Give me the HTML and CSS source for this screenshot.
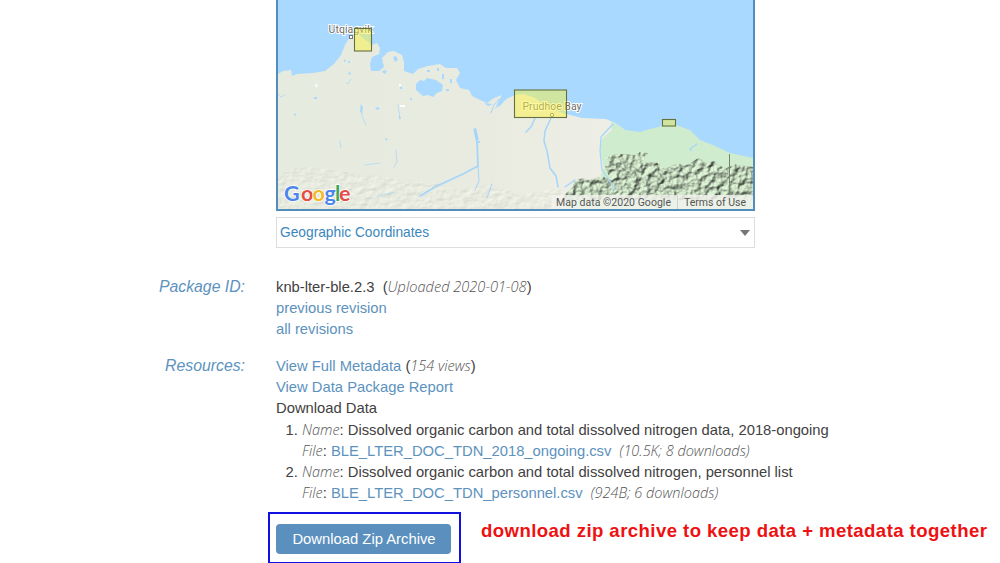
FILE: index.html
```html
<!DOCTYPE html>
<html lang="en">
<head>
<meta charset="utf-8">
<title>Data Package Summary</title>
<link rel="stylesheet" href="styles.css">
</head>
<body>
<main class="page">
  <section class="row">
    <div class="label"></div>
    <div class="spatial">
      <svg class="map" viewBox="278 0 475 209" width="475" height="209" role="img" aria-label="Map">
        <defs>
          <filter id="relief" x="0" y="0" width="1" height="1" color-interpolation-filters="sRGB">
            <feTurbulence type="fractalNoise" baseFrequency="0.16 0.17" numOctaves="3" seed="8" result="n"/>
            <feDiffuseLighting in="n" surfaceScale="3.300" diffuseConstant="1.150" lighting-color="#c6d9be" result="l"><feDistantLight azimuth="225" elevation="55"/></feDiffuseLighting>
            <feComposite in="l" in2="SourceAlpha" operator="in"/>
            <feGaussianBlur stdDeviation=".35"/>
          </filter>
          <filter id="softrelief" x="0" y="0" width="1" height="1" color-interpolation-filters="sRGB">
            <feTurbulence type="fractalNoise" baseFrequency="0.12 0.2" numOctaves="3" seed="3" result="n"/>
            <feDiffuseLighting in="n" surfaceScale=".8" diffuseConstant="1.150" lighting-color="#e9ebe0"><feDistantLight azimuth="225" elevation="60"/></feDiffuseLighting>
            <feComposite in2="SourceAlpha" operator="in"/>
          </filter>
          <linearGradient id="plain" x1="0" x2="1" y1="0" y2="0"><stop offset="0" stop-color="#e6ebdf"/><stop offset=".6" stop-color="#e9ebe0"/><stop offset="1" stop-color="#eeeee6"/></linearGradient>
        </defs>
        <rect x="278" width="475" height="209" fill="#a9d9fe"/>
        <path fill="url(#plain)" d="M278 74L283 71L291 70L292 76L297 74L313 73L325 71L334 64L341 55L345 45L350 37L356 33L363 38L372 45L377 43L380 48L379 54L372 57L370 64L371 71L379 71L384 67L382 58L388 52L394 51L402 55L404 62L404 71L413 74L418 69L428 66L440 64L446 68L457 68L460 73L456 80L460 88L469 90L472 96L480 100L487 103L494 98L502 95L499 100L495 109L504 100L515 95L524 94L535 98L548 108L566 114L582 118L606 119L615 123L625 130V209H278Z"/>
        <path fill="#d0eccf" d="M611 122L615 123L625 130L640 132L650 129L662 126L676 125L690 130L700 140L715 146L730 153L753 158V209H565L575 183L600 178L604 168L600 151L601 140L612 130Z"/>
        <path opacity=".4" filter="url(#softrelief)" d="M278 176L300 166L360 174L410 180L440 184L460 190L490 184L520 195L560 188L566 209H278Z"/>
        <path opacity=".85" filter="url(#relief)" d="M563 196L573 187L574 181L583 178L590 180L601 176L610 179L605 166L610 162L605 158L616 154L636 155L640 152L648 153L641 163L656 162L665 169L678 163L684 166L699 158L706 163L714 161L725 169L734 164L753 167V200H563Z"/>
        <path d="M729.500 154V200" stroke="#72866e"/>
        <g fill="#a9d9fe">
          <path d="M416 84L420 80L424 81L427 78L436 80L443 85L442 91L437 93L433 97L428 95L423 96L416 90Z"/>
          <path d="M427 70h3v2h-3zM437 68h2v3h-2zM442 74h2v5h-2zM450 79h2v4h-2zM393 57l3-1 2 4-3 2zM384 70l3 1-2 3-3-2zM377 107l3 1-2 2-3-1zM348 61h2v2h-2zM361 105l2 2-1 7-2-3zM344 59l2 2-2 1zM350 71l1 4-3-1zM314 97h3v2h-3zM294 113l2 1-1 3zM400 87h2v2h-2zM410 98h2v2h-2zM385 138l3 1-2 2zM446 89h3v2h-3zM399 115l2 3-2 1zM478 141h2v2h-2z"/>
          <path d="M484 103L493 104L488 106ZM501 99L508 97L498 108Z"/>
        </g>
        <g fill="none" stroke="#a5d5fb" stroke-linecap="round" stroke-linejoin="round">
          <path d="M475 129L477 141L478 166L463 174L450 180L435 187L420 196" stroke-width="1.800"/>
          <path d="M475 130L477 139" stroke-width="3.200"/>
          <path d="M499 99L494 105L491 113M478 166L479 181L475 190M492 184L487 198" stroke-width="1"/>
          <path d="M551 118L545 131L544 141L547 151L550 168L556 176L558 187M535 118L531 127L526 132" stroke-width="1.500"/>
          <path d="M613 124L601 137L600 151L602 170L612 184L614 190M697 144L690 149L691 151M575 180L565 187" stroke-width="1.200"/>
          <path d="M278 94L281 97L285 95M361 105L362 116L366 125M396 150L397 162L394 167M351 79L348 84L346 83M340 141L341 148M380 163L365 165M398 105L400 119M328 191L350 196M378 196L395 192" stroke-width=".7"/>
        </g>
        <path d="M400 105h5v2h-5zM315 84l3 1-2 3zM399 84h2v2h-2z" fill="#fff"/>
        <g class="place">
          <text x="328.500" y="33" textLength="44">Utqiagvik</text>
          <text x="522.500" y="110" textLength="59">Prudhoe Bay</text>
        </g>
        <g fill="#fff" stroke="#777"><rect x="349.500" y="35.500" width="3" height="3"/><circle cx="552" cy="115" r="1.700"/></g>
        <g fill="#fbf23b" fill-opacity=".48" stroke="#66703f" stroke-width="1.100">
          <rect x="354.500" y="28.500" width="17" height="22.500"/><rect x="514.500" y="90" width="52" height="27.500"/><rect x="662.500" y="119.500" width="13" height="6.500"/>
        </g>
        <text class="google" y="201"><tspan x="284" fill="#4c85ec">G</tspan><tspan x="301" fill="#e34d43">o</tspan><tspan x="312.500" fill="#f3ba28">o</tspan><tspan x="324.500" fill="#4c85ec">g</tspan><tspan x="335" fill="#40a65c">l</tspan><tspan x="339" fill="#e34d43">e</tspan></text>
        <rect x="552" y="195" width="201" height="14" fill="#f1f3ed" fill-opacity=".82"/>
        <path d="M677.500 195V209" stroke="#ccd2c8"/>
        <g class="credit"><text x="556" y="205.500" textLength="115">Map data ©2020 Google</text><text x="684" y="205.500" textLength="62">Terms of Use</text></g>
      </svg>
      <div class="coords"><span>Geographic Coordinates</span><i class="caret"></i></div>
    </div>
  </section>

  <section class="row package">
    <div class="label">Package ID:</div>
    <div class="body">
      <div>knb-lter-ble.2.3&nbsp; (<em class="uploaded">Uploaded 2020-01-08</em>)</div>
      <div><a>previous revision</a></div>
      <div><a>all revisions</a></div>
    </div>
  </section>

  <section class="row resources">
    <div class="label">Resources:</div>
    <div class="body">
      <div><a>View Full Metadata</a> (<em>154 views</em>)</div>
      <div><a>View Data Package Report</a></div>
      <div>Download Data</div>
      <ol class="files">
        <li><em>Name</em>: Dissolved organic carbon and total dissolved nitrogen data, 2018-ongoing<br><em>File</em>: <a>BLE_LTER_DOC_TDN_2018_ongoing.csv</a>&nbsp; <em>(10.5K; 8 downloads)</em></li>
        <li><em>Name</em>: Dissolved organic carbon and total dissolved nitrogen, personnel list<br><em>File</em>: <a>BLE_LTER_DOC_TDN_personnel.csv</a>&nbsp; <em>(924B; 6 downloads)</em></li>
      </ol>
    </div>
  </section>

  <section class="download">
    <div class="highlight"><button class="button">Download Zip Archive</button></div>
    <strong class="note">download zip archive to keep data + metadata together</strong>
  </section>
</main>
</body>
</html>
```
FILE: styles.css
```css
* { box-sizing: border-box; }
body { margin: 0; background: #fff; color: #414141; font: 14.77px/21.1px "Liberation Sans", Arial, sans-serif; }
.page { width: 1000px; height: 563px; overflow: hidden; }
.row { display: grid; grid-template-columns: 245px 1fr; column-gap: 31px; }
.label { margin-top: -1px; text-align: right; font-size: 15.8px; font-style: italic; color: #5c92bd; }
.spatial { width: 479px; }
.map { display: block; box-sizing: content-box; border: 2px solid #528dbb; border-top: 0; }
.place { font: 10.5px Roboto, sans-serif; fill: #6b6b6b; stroke: #fff; stroke-width: 2px; paint-order: stroke; }
.credit { font: 10.5px Roboto, sans-serif; fill: #555; }
.google { font: 700 21.5px Lato, sans-serif; stroke: #fff; stroke-width: 1.5px; paint-order: stroke; }
.coords { display: flex; align-items: center; justify-content: space-between; height: 31px; margin-top: 6px; padding: 0 4px 0 3px; border: 1px solid #ddd; color: #3a87bd; font-size: 13.75px; }
.caret { border: 5px solid transparent; border-top: 6px solid #777; border-bottom: 0; }
.package { margin-top: 29px; }
.resources { margin-top: 16px; }
.body { white-space: nowrap; }
a { color: #5c92bd; }
em { font-family: "Open Sans", sans-serif; font-weight: 300; font-style: italic; font-size: 14.5px; line-height: 1; color: #555; }
.uploaded { font-size: 14.6px; }
.files { margin: 0; padding-left: 26px; }
.download { display: flex; align-items: flex-start; margin: 8px 0 0 268px; }
.highlight { width: 193px; height: 52px; padding: 10px 6px; border: 2px solid #1010e0; }
.button { display: block; width: 175px; height: 30px; padding: 0 0 0 1px; border: 0; border-radius: 4px; background: #5a8fbe; color: #fff; font: 14.8px "Liberation Sans", Arial, sans-serif; }
.note { margin: 8px 0 0 20px; color: #ee1111; font-size: 18.6px; letter-spacing: .42px; white-space: nowrap; }
```
